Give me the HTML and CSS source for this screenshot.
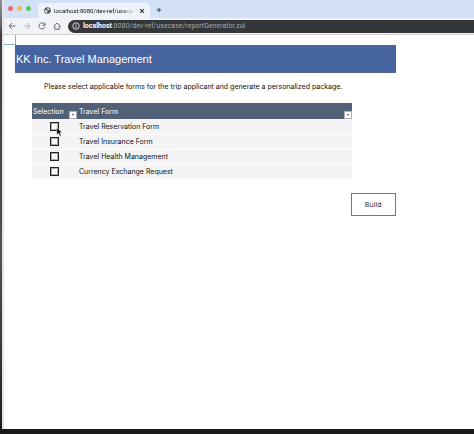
FILE: index.html
```html
<!DOCTYPE html>
<html lang="en">
<head>
    <meta charset="utf-8">
    <title>KK Inc. Travel Management</title>
    <link rel="stylesheet" href="styles.css">
</head>
<body>
    <div class="browser">
        <div class="tab-strip">
            <div class="lights">
                <span class="light red"></span>
                <span class="light yellow"></span>
                <span class="light green"></span>
            </div>
            <div class="tab">
                <svg class="globe" viewBox="0 0 16 16">
                    <circle cx="8" cy="8" r="7.5" fill="#50555c"/>
                    <path d="M2.5 6.5L6 7.5l2 2-1 4.5C4.500 13.500 2 11 2.500 6.500zM8 2.500l5 2-1 3-3-1-2.500-1z" fill="#e9eff9"/>
                </svg>
                <span class="tab-title">localhost:8080/dev-ref/useca</span>
                <button class="tab-close" aria-label="Close tab">
                    <svg viewBox="0 0 8 8"><path d="M1.500 1.500l5 5M6.500 1.500l-5 5" fill="none" stroke="#33373d" stroke-width="1.500"/></svg>
                </button>
            </div>
            <button class="new-tab" aria-label="New tab">
                <svg viewBox="0 0 8 8"><path d="M4 1v6M1 4h6" fill="none" stroke="#33415c" stroke-width="1.300"/></svg>
            </button>
        </div>
        <div class="toolbar">
            <button class="nav-button" aria-label="Back">
                <svg viewBox="0 0 16 16"><path d="M15 8H2.500M8 2L2 8l6 6"/></svg>
            </button>
            <button class="nav-button forward" aria-label="Forward">
                <svg viewBox="0 0 16 16"><path d="M1 8h12.500M8 2l6 6-6 6"/></svg>
            </button>
            <button class="nav-button" aria-label="Reload">
                <svg viewBox="0 0 16 16"><path d="M13.500 10A6 6 0 1 1 12.500 4L14 6M14.200 1v5.500H9"/></svg>
            </button>
            <button class="nav-button" aria-label="Home">
                <svg viewBox="0 0 16 16"><path d="M1 8.500L8 2l7 6.500M3.500 7v7.500h9V7"/></svg>
            </button>
            <div class="address">
                <svg class="info" viewBox="0 0 16 16"><circle cx="8" cy="8" r="6.500" fill="none" stroke="#e4e6e8" stroke-width="1.800"/><path d="M8 7v5M8 4v1.800" stroke="#e4e6e8" stroke-width="1.800"/></svg>
                <span class="url"><b>localhost</b>:8080/dev-ref/usecase/reportGenerator.zul</span>
            </div>
        </div>
        <main class="page">
            <div class="corner"></div>
            <div class="sheet">
                <h1 class="banner">KK Inc. Travel Management</h1>
                <p class="hint">Please select applicable forms for the trip applicant and generate a personalized package.</p>
                <table class="forms">
                    <thead>
                        <tr>
                            <th class="pick"><div class="head">Selection <button class="filter" aria-label="Filter selection"></button></div></th>
                            <th><div class="head">Travel Form <button class="filter" aria-label="Filter travel form"></button></div></th>
                        </tr>
                    </thead>
                    <tbody>
                        <tr>
                            <td class="pick">
                                <span class="check-wrap">
                                    <input type="checkbox" id="reservation">
                                    <svg class="cursor" viewBox="0 0 12 18"><path d="M1 1v13l3.200-2.800 2.300 5.300 2.500-1-2.300-5.300H11z" fill="#000" stroke="#fff" stroke-width="1"/></svg>
                                </span>
                            </td>
                            <td><label for="reservation">Travel Reservation Form</label></td>
                        </tr>
                        <tr>
                            <td class="pick"><input type="checkbox" id="insurance"></td>
                            <td><label for="insurance">Travel Insurance Form</label></td>
                        </tr>
                        <tr>
                            <td class="pick"><input type="checkbox" id="health"></td>
                            <td><label for="health">Travel Health Management</label></td>
                        </tr>
                        <tr>
                            <td class="pick"><input type="checkbox" id="currency"></td>
                            <td><label for="currency">Currency Exchange Request</label></td>
                        </tr>
                    </tbody>
                </table>
                <div class="actions">
                    <button class="build">Build</button>
                </div>
            </div>
        </main>
    </div>
</body>
</html>
```

FILE: styles.css
```css
* {
    box-sizing: border-box;
}

body {
    margin: 0;
    min-height: 100vh;
    display: flex;
    padding: 0 0 5px 2px;
    background: linear-gradient(#8d9096 0, #66666a 25px, #3e3e40 35px, #505052 60%, #333234 85%, #1c191c 100%);
    font-family: Inter, "Liberation Sans", Arial, sans-serif;
    font-size: 7px;
    color: #111;
}

button {
    padding: 0;
    border: none;
    background: none;
    font: inherit;
    color: inherit;
}

svg {
    display: block;
}

.browser {
    flex: 1;
    min-width: 0;
    display: flex;
    flex-direction: column;
    background: #fff;
    border-left: 2px solid #e6e6e8;
}

/* browser chrome */
.tab-strip {
    display: flex;
    align-items: flex-end;
    height: 18px;
    background: #d2e1f7;
}

.lights {
    display: flex;
    gap: 4px;
    padding: 0 7px 7px 4px;
}

.light {
    width: 5px;
    height: 5px;
    border-radius: 50%;
}

.red {
    background: #ee6a70;
}

.yellow {
    background: #f2bd4b;
}

.green {
    background: #62c667;
}

.tab {
    display: flex;
    align-items: center;
    gap: 3px;
    width: 112px;
    height: 15px;
    padding: 0 5px 0 6px;
    background: #edf2fb;
    border-radius: 4px 4px 0 0;
}

.globe {
    flex: none;
    width: 7px;
    height: 7px;
}

.tab-title {
    flex: 1;
    white-space: nowrap;
    font-family: Roboto, sans-serif;
    font-size: 6px;
    mask-image: linear-gradient(90deg, #000 80%, transparent);
}

.tab-close,
.new-tab {
    flex: none;
    width: 6px;
    height: 6px;
}

.new-tab {
    margin: 0 0 5px 6px;
}

.toolbar {
    display: flex;
    align-items: center;
    gap: 7px;
    height: 17px;
    padding-left: 4px;
    background: #f1f3f6;
    border-bottom: 1px solid #cfd3d6;
}

.nav-button {
    flex: none;
    width: 8px;
    height: 8px;
}

.nav-button path {
    fill: none;
    stroke: #5c6066;
    stroke-width: 1.8;
}

.forward path {
    stroke: #a9adb2;
}

.address {
    flex: 1;
    display: flex;
    align-items: center;
    gap: 3px;
    height: 13px;
    padding-left: 4px;
    background: #34363a;
    border-radius: 7px 0 0 7px;
    font-family: Roboto, sans-serif;
    font-size: 7px;
    color: #a3a6aa;
}

.address b {
    color: #fff;
}

.info {
    width: 8px;
    height: 8px;
}

/* report page */
.page {
    flex: 1;
}

.corner {
    width: 12px;
    height: 10px;
    border-right: 1px solid #84b2ca;
    border-bottom: 1px solid #84b2ca;
}

.sheet {
    width: 81%;
    margin-left: 11px;
}

.banner {
    margin: 0;
    padding-left: 1px;
    background: #4664a0;
    border: 1px solid #51658f;
    border-left: none;
    font-family: "Liberation Sans", Arial, sans-serif;
    font-size: 11px;
    font-weight: normal;
    line-height: 26px;
    color: #fff;
}

.hint {
    margin: 8px 0 10px 29px;
    line-height: 12px;
}

.forms {
    width: 84%;
    margin-left: 17px;
    border-collapse: collapse;
}

.forms th,
.forms td {
    padding: 0 0 0 2px;
    text-align: left;
    font-weight: normal;
}

.forms th {
    height: 16px;
    padding-left: 1px;
    background: #536178;
    color: #fff;
}

.forms th + th {
    padding-left: 2px;
}

.forms td {
    height: 15px;
    background: #f4f4f4;
    border-bottom: 1px solid #fff;
}

.forms .pick {
    width: 45px;
}

.forms td.pick {
    padding: 0;
}

.head {
    display: flex;
    justify-content: space-between;
    align-items: center;
    height: 16px;
}

.filter {
    display: flex;
    align-items: center;
    justify-content: center;
    align-self: flex-end;
    width: 8px;
    height: 8px;
    background: #fff;
    border: 1px solid #aab0ba;
}

.filter::after {
    content: "";
    border: 1px solid transparent;
    border-top: 2px solid #444;
    border-bottom: none;
}

.forms input {
    appearance: none;
    display: block;
    width: 9px;
    height: 9px;
    margin: 0 auto;
    border: 1px solid #222;
    outline: 1px solid #aaa;
    outline-offset: -2px;
    background: #fff;
}

.forms label {
    display: block;
}

.check-wrap {
    display: block;
    position: relative;
    width: 9px;
    margin: 0 auto;
}

.cursor {
    position: absolute;
    left: 6px;
    top: 5px;
    width: 7px;
    height: 10px;
}

.actions {
    display: flex;
    justify-content: flex-end;
    margin-top: 13px;
}

.build {
    width: 45px;
    height: 23px;
    border: 1px solid #777;
    background: #fff;
    font-family: "Open Sans", sans-serif;
    font-size: 7px;
}
```
